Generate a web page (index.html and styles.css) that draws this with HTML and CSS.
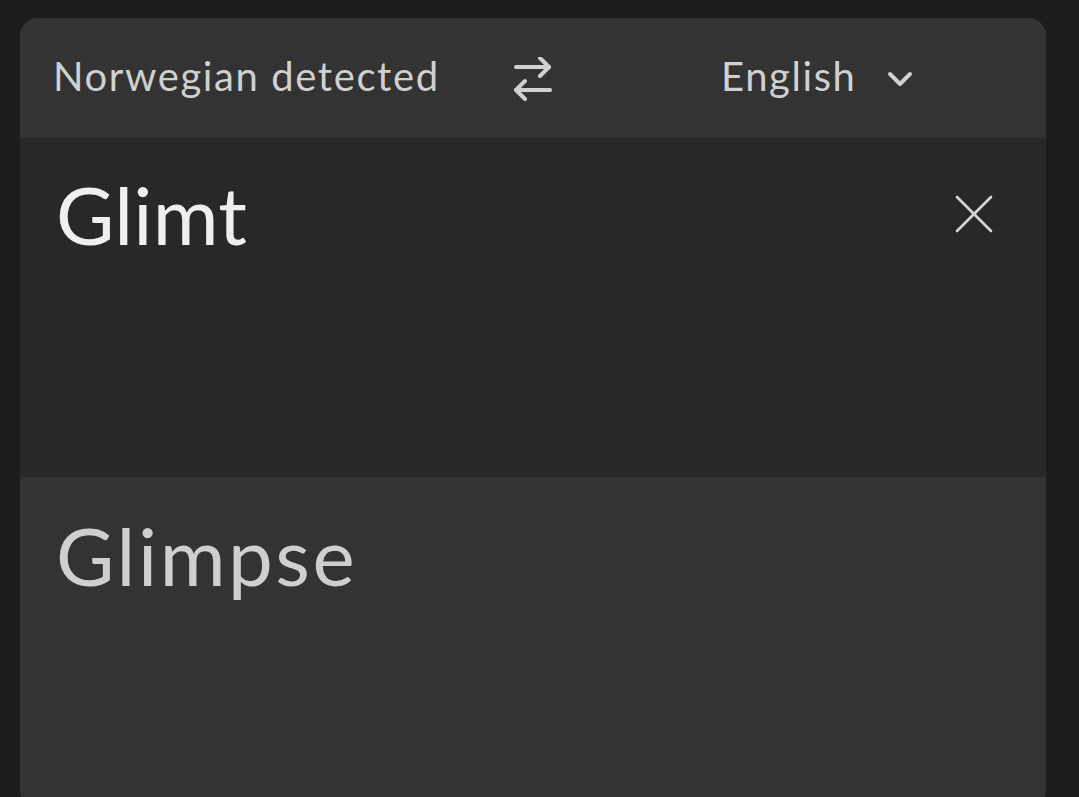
FILE: index.html
```html
<!DOCTYPE html>
<html lang="en">
<head>
<meta charset="utf-8">
<title>Translate</title>
<link rel="stylesheet" href="styles.css">
</head>
<body>
<div class="card">
  <div class="header">
    <div class="lang lang-source">Norwegian detected</div>
    <div class="swap">
      <svg width="40" height="44" viewBox="0 0 40 44" fill="none" stroke="currentColor" stroke-width="4" stroke-linecap="round" stroke-linejoin="round">
        <path d="M3 10 H36"/>
        <path d="M27 1 L36 10 L27 19"/>
        <path d="M37 33 H3"/>
        <path d="M12 24 L3 33 L12 42"/>
      </svg>
    </div>
    <div class="lang lang-target">
      <span>English</span>
      <svg class="chev" width="26" height="16" viewBox="0 0 26 16" fill="none" stroke="currentColor" stroke-width="4" stroke-linecap="round" stroke-linejoin="round">
        <path d="M3 3 L13 13 L23 3"/>
      </svg>
    </div>
  </div>
  <div class="input">
    <div class="source-text">Glimt</div>
    <button class="clear" aria-label="Clear">
      <svg width="38" height="38" viewBox="0 0 38 38" fill="none" stroke="currentColor" stroke-width="2.6" stroke-linecap="round">
        <path d="M2 2 L36 36"/>
        <path d="M36 2 L2 36"/>
      </svg>
    </button>
  </div>
  <div class="output">
    <div class="target-text">Glimpse</div>
  </div>
</div>
</body>
</html>
```

FILE: styles.css
```css
html, body {
  margin: 0;
  padding: 0;
  background: #1c1c1c;
  height: 100%;
  overflow: hidden;
}

body {
  font-family: Lato, "Open Sans", sans-serif;
  padding: 18px 33px 0 20px;
}

.card {
  width: 1026px;
  border-radius: 18px;
  overflow: hidden;
  background: #333333;
  height: 790px;
}

.header {
  height: 120px;
  background: #333333;
  display: grid;
  grid-template-columns: 1fr 40px 1fr;
  align-items: center;
  padding: 0 32px;
  color: #d0d0d0;
}

.lang {
  font-size: 40px;
  line-height: 1;
  white-space: nowrap;
  letter-spacing: 1.6px;
  margin-top: -4px;
}

.lang-source {
  padding-left: 1px;
}

.swap {
  display: flex;
  justify-content: center;
  align-items: center;
  padding-top: 2px;
}

.swap svg {
  display: block;
}

.lang-target {
  display: flex;
  align-items: center;
  gap: 30px;
  padding-left: 168px;
}

.chev {
  display: block;
  margin-top: 6px;
}

.input {
  height: 339px;
  background: #282828;
  display: flex;
  justify-content: space-between;
  align-items: flex-start;
  padding: 0 53px 0 36px;
  box-sizing: border-box;
}

.source-text,
.target-text {
  font-size: 80px;
  line-height: 1;
  padding-top: 36px;
}

.source-text {
  color: #efefef;
  letter-spacing: 0.2px;
}

.clear {
  background: none;
  border: 0;
  padding: 0;
  margin-top: 57px;
  color: #d4d4d4;
  cursor: pointer;
}

.clear svg {
  display: block;
}

.output {
  padding: 0 36px;
}

.target-text {
  color: #cfcfcf;
  padding-top: 38px;
  letter-spacing: 2.5px;
}
```
